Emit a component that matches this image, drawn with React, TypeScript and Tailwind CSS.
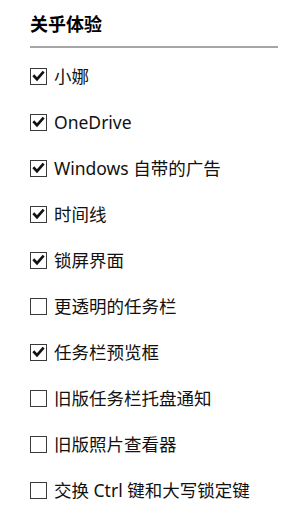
import React from "react";

const items: [string, boolean][] = [
  ["小娜", true],
  ["OneDrive", true],
  ["Windows 自带的广告", true],
  ["时间线", true],
  ["锁屏界面", true],
  ["更透明的任务栏", false],
  ["任务栏预览框", true],
  ["旧版任务栏托盘通知", false],
  ["旧版照片查看器", false],
  ["交换 Ctrl 键和大写锁定键", false],
];

function Box({ checked }: { checked: boolean }) {
  return (
    <div className="w-[17px] h-[17px] border border-[#3a3a3a] bg-white flex items-center justify-center shrink-0">
      {checked && (
        <svg width="13" height="13" viewBox="0 0 13 13">
          <path d="M2.2 6.2 L5 9.2 L10.8 2.6" fill="none" stroke="#111" strokeWidth="2.6" strokeLinecap="square" />
        </svg>
      )}
    </div>
  );
}

export default function App() {
  return (
    <div
      className="w-[308px] h-[518px] bg-white pl-[30px] pr-[30px] text-[#111]"
      style={{ fontFamily: '"Noto Sans", "Noto Sans CJK SC", sans-serif' }}
    >
      <div className="pt-[11px] h-[46px] text-[18px] font-bold leading-[26px] text-black">关乎体验</div>
      <div className="h-[2px] bg-[#a6a6a6] w-[248px]" />
      <div className="pt-[5px] flex flex-col">
        {items.map(([t, c]) => (
          <div key={t} className="h-[46px] flex items-center gap-[7px]">
            <Box checked={c} />
            <span className="text-[17.5px] leading-[20px] whitespace-nowrap">{t}</span>
          </div>
        ))}
      </div>
    </div>
  );
}
